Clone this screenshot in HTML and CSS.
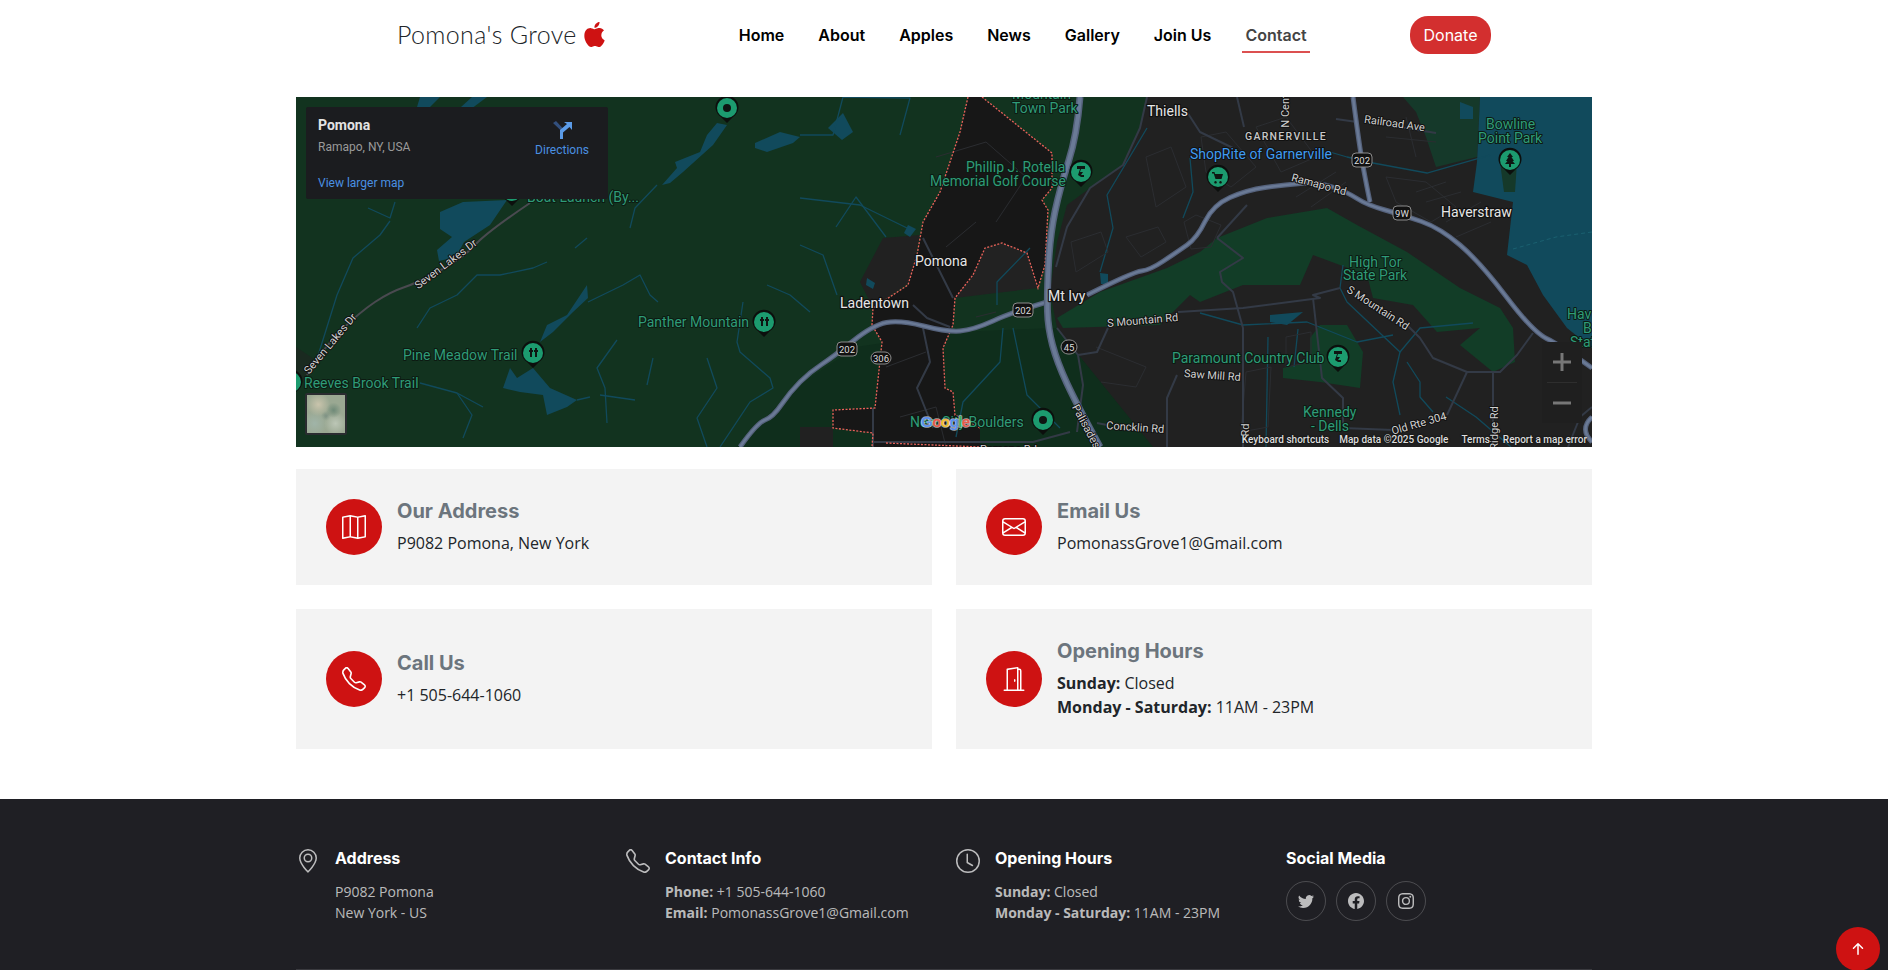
FILE: index.html
```html
<!DOCTYPE html>
<html lang="en">
<head>
    <meta charset="UTF-8">
    <meta name="viewport" content="width=device-width, initial-scale=1.0">
    <title>Contact - Pomona's Grove</title>
    <link rel="stylesheet" href="styles.css">
</head>
<body>
    <header class="header">
        <a class="logo" href="#">
            <span class="logo-text">Pomona's Grove</span>
            <svg class="logo-icon" viewBox="0 0 16 16"><path d="M11.182.008C11.148-.03 9.923.023 8.857 1.18c-1.066 1.156-.902 2.482-.878 2.516.024.034 1.52.087 2.475-1.258.955-1.345.762-2.391.728-2.43Zm3.314 11.733c-.048-.096-2.325-1.234-2.113-3.422.212-2.189 1.675-2.789 1.698-2.854.023-.065-.597-.79-1.254-1.157a3.692 3.692 0 0 0-1.563-.434c-.108-.003-.483-.095-1.254.116-.508.139-1.653.589-1.968.607-.316.018-1.256-.522-2.267-.665-.647-.1-1.333.105-1.824.303-.49.198-1.422.761-2.074 2.244-.652 1.482-.311 3.83-.067 4.56.244.729.625 1.924 1.273 2.796.576.984 1.34 1.667 1.659 1.899.319.232 1.219.386 1.843.067.502-.308 1.408-.485 1.766-.472.357.013 1.061.154 1.782.539.571.197 1.111.115 1.652-.105.541-.221 1.324-1.059 2.238-2.758.347-.79.505-1.217.473-1.282Z"/></svg>
        </a>
        <nav class="nav">
            <a href="#">Home</a>
            <a href="#">About</a>
            <a href="#">Apples</a>
            <a href="#">News</a>
            <a href="#">Gallery</a>
            <a href="#">Join Us</a>
            <a href="#" class="active">Contact</a>
        </nav>
        <a class="donate" href="#">Donate</a>
    </header>

    <main class="contact">
        <div class="map">
            <svg class="map-canvas" viewBox="0 0 1296 350" width="1296" height="350">
                <defs>
                    <g id="pin-shape">
                        <path d="M0 15 L-6 9 A11.5 11.5 0 1 1 6 9 Z" fill="#0c0f0d"/>
                        <circle cx="0" cy="0" r="10" class="pin-fill"/>
                    </g>
                    <g id="hwy-paths">
                        <path d="M444 350 Q461 326 469 323 Q477 320 485.500 307.500 Q494 295 504 285 Q514 275 525.500 267.500 Q537 260 557 244 Q577 228 590.500 225.500 Q604 223 627.500 229 Q651 235 664 234 Q677 233 697 224 Q717 215 751 205"/>
                        <path d="M791 198 Q837 175 845.500 174 Q854 173 867.500 164 Q881 155 891 148 Q901 141 909 124.500 Q917 108 934 100.500 Q951 93 969 90.500 Q987 88 1004.500 86.500 Q1022 85 1036.500 90 Q1051 95 1061 101.500 Q1071 108 1089 113 Q1107 118 1125.500 124.500 Q1144 131 1164 148 Q1184 165 1210.500 200 Q1237 235 1250.500 241.500 Q1264 248 1296 271"/>
                        <path d="M1057 0 Q1061 31 1064 51 Q1067 71 1074 105"/>
                        <path d="M1296 320 Q1283 332 1296 345"/>
                    </g>
                    <path id="hwy-wide" d="M784 0 Q781 38 772.500 64.500 Q764 91 759 114.500 Q754 138 752.500 168 Q751 198 751.500 214.500 Q752 231 756.500 248 Q761 265 771 286.500 Q781 308 804 350"/>
                </defs>

                <!-- land -->
                <rect width="1296" height="350" fill="#12331f"/>
                <path d="M440 350 L500 290 L560 250 L660 235 L760 231 L860 350Z" fill="#0f2e1c"/>
                <path d="M851 0 L844 31 L827 68 L794 91 L771 108 L761 145 L754 195 L761 231 L857 350 L1296 350 L1296 0Z" fill="#212121"/>
                <path d="M504 330 L537 330 L537 350 L504 350Z" fill="#212121"/>
                <path d="M0 250 L18 262 L8 285 L0 280Z" fill="#1a2a20"/>
                <path d="M564 185 L587 141 L624 138 L614 185 L577 211Z" fill="#212121"/>
                <path d="M659 201 L689 151 L706 146 L731 156 L742 191 L700 196Z" fill="#222222"/>
                <path d="M761 221 L804 195 L871 171 L904 155 L921 141 L971 121 L1031 111 L1061 128 L1111 155 L1164 191 L1204 211 L1217 231 L1219 265 L1197 275 L1164 248 L1184 231 L1141 235 L1117 208 L1077 201 L1071 178 L1017 158 L1004 188 L947 188 L904 205 L894 198 L864 228 L767 231Z" fill="#123d27"/>
                <path d="M1014 241 L1024 228 L1051 228 L1067 255 L1064 291 L1024 285 L987 281 L987 271 L1014 265Z" fill="#123d27"/>
                <path d="M1107 0 L1184 0 L1181 60 L1140 70 L1130 40 L1120 15Z" fill="#15392a"/>
                <path d="M672 0 L664 35 L644 95 L627 125 L621 158 L612 188 L577 211 L576 228 L586 245 L579 311 L537 313 L537 331 L577 336 L576 350 L684 350 L684 331 L659 318 L657 295 L649 291 L647 251 L657 228 L659 201 L677 178 L689 151 L706 146 L731 156 L742 191 L749 168 L752 113 L746 103 L756 91 L756 56 L686 0Z" fill="#171717"/>

                <!-- water -->
                <g fill="#114a5c">
                    <path d="M1184 0 L1181 65 L1177 95 L1217 105 L1211 158 L1231 168 L1247 198 L1271 231 L1296 251 L1296 0Z"/>
                    <path d="M144 115 L167 105 L211 103 L194 128 L168 145 L160 160 L143 164 L141 153 L156 140 L144 132Z"/>
                    <path d="M124 0 L144 0 L134 10 L121 10Z"/>
                    <path d="M176 0 L191 0 L175 12 L165 10Z"/>
                    <path d="M431 28 L421 26 L411 38 L404 55 L379 65 L381 71 L366 88 L374 86 L387 75 L417 48Z"/>
                    <path d="M459 46 L484 35 L504 40 L497 46 L471 55 L459 51Z"/>
                    <path d="M291 188 L271 218 L251 228 L244 245 L257 235 L277 215 L292 201Z"/>
                    <path d="M207 291 L214 271 L221 281 L237 271 L254 291 L281 303 L271 310 L251 318 L247 298 L224 295Z"/>
                    <path d="M532 31 L547 16 L557 35 L546 43Z"/>
                    <path d="M571 181 L579 186 L577 192 L570 188Z"/>
                    <path d="M804 176 L812 177 L812 187 L805 187Z"/>
                    <path d="M974 218 L1007 215 L991 228 L974 225Z"/>
                    <path d="M1164 5 L1177 10 L1177 22 L1164 22Z"/>
                    <path d="M620 132 L612 128 L608 136 L614 140Z"/>
                </g>
                <path d="M1204 65 L1221 65 L1219 95 L1208 95Z" fill="#15392a"/>
                <path d="M1217 152 L1260 140 L1296 135" fill="none" stroke="#1a6070" stroke-width="1" stroke-dasharray="4 3"/>

                <!-- streams -->
                <g class="streams">
                    <path d="M20 265 L41 198 L57 161 L84 138 L94 124"/>
                    <path d="M72 111 L94 121 L99 105"/>
                    <path d="M121 231 L134 211 L161 198 L181 178 L204 178 L237 171 L251 165"/>
                    <path d="M334 131 L339 111 L361 88"/>
                    <path d="M291 141 L279 151"/>
                    <path d="M292 205 L327 188 L344 178 L354 198 L362 205"/>
                    <path d="M471 188 L494 198 L514 215"/>
                    <path d="M447 205 L441 245 L444 255 L474 281 L477 291 L454 305 L424 350"/>
                    <path d="M411 261 L421 291 L401 321 L411 350"/>
                    <path d="M321 243 L301 271 L309 291 L311 326"/>
                    <path d="M161 296 L176 318 L167 341"/>
                    <path d="M124 286 L161 296 L187 310"/>
                    <path d="M281 303 L294 300 M304 298 L339 303"/>
                    <path d="M357 261 L351 288"/>
                    <path d="M504 38 L537 38 L547 0 M547 0 L614 1 L604 38"/>
                    <path d="M504 101 L564 108 L611 131"/>
                    <path d="M504 148 L527 158 L541 198"/>
                    <path d="M701 208 L701 185 L734 151"/>
                    <path d="M717 231 L731 298 L764 331"/>
                    <path d="M707 231 L704 265 L667 305 L660 340"/>
                    <path d="M851 31 L811 98 L817 131 L804 175"/>
                    <path d="M894 61 L897 95 L887 121"/>
                    <path d="M1047 168 L1044 191 L1051 205 L1104 255 L1124 231 L1177 226"/>
                    <path d="M1104 255 L1097 285 L1104 318"/>
                    <path d="M1111 265 L1124 285 L1124 300 L1137 315"/>
                    <path d="M904 216 L947 228 L1011 225 L1061 245 L1097 238"/>
                    <path d="M1077 66 L1131 76 L1194 58"/>
                    <path d="M1034 55 L1051 60 L1077 66"/>
                    <path d="M972 240 L970 350 M1002 232 L998 270"/>
                    <path d="M1150 300 L1180 320 L1215 350"/>
                    <path d="M540 130 L560 100 L590 140"/>
                </g>

                <!-- streets -->
                <g class="streets">
                    <path d="M888 125 L900 118 L925 128 L915 150 L895 152Z"/>
                    <path d="M830 140 L862 130 L870 145 L845 160Z"/>
                    <path d="M775 145 L805 135 L812 155 L780 175 Z"/>
                    <path d="M850 60 L875 50 L890 90 L860 110 Z"/>
                    <path d="M905 40 L930 35 L960 70 L935 90 L910 75Z"/>
                    <path d="M960 30 L990 20 L1020 60 L985 75 Z"/>
                    <path d="M1090 80 L1130 85 L1160 110 L1135 125 L1100 105Z"/>
                    <path d="M1120 95 L1150 85 M1130 105 L1165 95 M1150 125 L1185 105 M1160 140 L1195 125"/>
                    <path d="M1000 100 L1040 75 M1015 110 L1050 85"/>
                    <path d="M990 240 L1015 235 L1015 265 L990 270Z"/>
                    <path d="M1110 20 L1120 60 M1090 40 L1140 45"/>
                    <path d="M950 275 L975 270 L972 330 L945 335Z"/>
                    <path d="M680 220 L700 215 M640 60 L690 45 L730 80 L700 125 M650 150 L680 125"/>
                    <path d="M604 320 L640 310 L650 350 M590 270 L630 255"/>
                    <path d="M800 250 L850 270 L840 290 L805 285"/>
                </g>
                <g class="roads-minor">
                    <path d="M851 0 L844 31 L827 68 L794 91 L771 130 L760 170"/>
                    <path d="M891 15 L904 35 L937 51 M941 0 L948 30"/>
                    <path d="M761 231 L782 258 L787 288 L784 311 L781 335 M782 258 L801 255 L812 231"/>
                    <path d="M801 326 L811 328 M881 278 L871 301 L871 350"/>
                    <path d="M921 141 L951 108 M921 141 L947 161 L924 175 L926 185 L937 195 L947 231 L947 350"/>
                    <path d="M882 215 L947 211 L1024 201 L1017 198 L1044 191"/>
                    <path d="M1111 228 L1124 241 L1137 261 L1171 275 L1204 275 L1221 258 L1237 236"/>
                    <path d="M1171 275 L1151 318 M1197 275 L1197 350"/>
                    <path d="M1017 201 L1026 281 L1047 301 L1047 328 M1047 331 L1097 333"/>
                    <path d="M627 141 L644 175 L657 201 M617 208 L631 221 L654 230"/>
                    <path d="M627 231 L634 265 L621 291 L637 331"/>
                    <path d="M577 345 L737 345 L774 335 M577 311 L577 350"/>
                    <path d="M1040 22 L1061 25 M1140 36 L1090 28"/>
                    <path d="M1272 350 L1284 320 L1296 310"/>
                </g>
                <path class="road-lake" d="M11 278 Q27 251 45.500 233 Q64 215 79 205 Q94 195 107.500 190.500 Q121 186 144 173.500 Q167 161 179 148 Q191 135 234 106"/>
                <g class="boundary">
                    <path d="M672 0 L664 35 L644 95 L627 125 L621 158 L612 188 L577 211 L576 228 L586 245 L579 311 L537 313 L537 331 L577 336 L576 350"/>
                    <path d="M590 346 L684 350 M684 331 L659 318 L657 295 L649 291 L647 251 L657 228 L659 201 L677 178 L689 151 L706 146 L731 156 L742 191 L749 168 L752 113 L746 103 L756 91 L756 56 L686 0"/>
                </g>

                <!-- highways -->
                <use href="#hwy-paths" class="hwy-outer"/>
                <use href="#hwy-paths" class="hwy-inner"/>
                <use href="#hwy-wide" class="hwy-wide-outer"/>
                <use href="#hwy-wide" class="hwy-wide-inner"/>

                <!-- road labels -->
                <g class="lbl-road">
                    <text transform="translate(152 170) rotate(-37)" text-anchor="middle">Seven Lakes Dr</text>
                    <text transform="translate(37 249) rotate(-50)" text-anchor="middle">Seven Lakes Dr</text>
                    <text transform="translate(847 227) rotate(-5)" text-anchor="middle">S Mountain Rd</text>
                    <text transform="translate(916 282) rotate(4)" text-anchor="middle">Saw Mill Rd</text>
                    <text transform="translate(839 334) rotate(4)" text-anchor="middle">Concklin Rd</text>
                    <text transform="translate(787 331) rotate(62)" text-anchor="middle">Palisades</text>
                    <text transform="translate(1098 30) rotate(8)" text-anchor="middle">Railroad Ave</text>
                    <text transform="translate(1022 91) rotate(15)" text-anchor="middle">Ramapo Rd</text>
                    <text transform="translate(1080 214) rotate(33)" text-anchor="middle">S Mountain Rd</text>
                    <text transform="translate(1124 330) rotate(-16)" text-anchor="middle">Old Rte 304</text>
                    <text transform="translate(993 14) rotate(-90)" text-anchor="middle">N Cent</text>
                    <text transform="translate(1202 331) rotate(-90)" text-anchor="middle">Ridge Rd</text>
                    <text transform="translate(953 333) rotate(-90)" text-anchor="middle">Rd</text>
                    <text x="684" y="356">Pomona Rd</text>
                </g>

                <!-- shields -->
                <g class="shield">
                    <g transform="translate(727 213)"><rect x="-10" y="-7" width="20" height="14" rx="4"/><text text-anchor="middle" y="3.5">202</text></g>
                    <g transform="translate(551 252)"><rect x="-10" y="-7" width="20" height="14" rx="4"/><text text-anchor="middle" y="3.5">202</text></g>
                    <g transform="translate(585 261)"><rect x="-10" y="-6" width="20" height="12" rx="6"/><text text-anchor="middle" y="3.5">306</text></g>
                    <g transform="translate(773 250)"><rect x="-8" y="-7" width="16" height="14" rx="7"/><text text-anchor="middle" y="3.5">45</text></g>
                    <g transform="translate(1066 63)"><rect x="-10" y="-7" width="20" height="14" rx="4"/><text text-anchor="middle" y="3.5">202</text></g>
                    <g transform="translate(1106 116)"><rect x="-9" y="-7" width="18" height="14" rx="4"/><text text-anchor="middle" y="3.5">9W</text></g>
                </g>

                <!-- place labels -->
                <g class="lbl-green">
                    <text x="231" y="105">Boat Launch (By...</text>
                    <text x="107" y="263">Pine Meadow Trail</text>
                    <text x="8" y="291">Reeves Brook Trail</text>
                    <text x="342" y="230">Panther Mountain</text>
                    <text x="716" y="2">Mountain</text>
                    <text x="716" y="16">Town Park</text>
                    <text x="670" y="75">Phillip J. Rotella</text>
                    <text x="634" y="89">Memorial Golf Course</text>
                    <text x="614" y="330">New City Boulders</text>
                    <text x="876" y="266">Paramount Country Club</text>
                    <text x="1053" y="170">High Tor</text>
                    <text x="1047" y="183">State Park</text>
                    <text x="1007" y="320">Kennedy</text>
                    <text x="1015" y="334">- Dells</text>
                    <text x="1190" y="32">Bowline</text>
                    <text x="1182" y="46">Point Park</text>
                    <text x="1271" y="222">Hav</text>
                    <text x="1287" y="236">B</text>
                    <text x="1274" y="250">Stat</text>
                </g>
                <g class="lbl-town">
                    <text x="851" y="19">Thiells</text>
                    <text x="619" y="169">Pomona</text>
                    <text x="544" y="211">Ladentown</text>
                    <text x="752" y="204">Mt Ivy</text>
                    <text x="1145" y="120">Haverstraw</text>
                </g>
                <text class="lbl-hamlet" x="949" y="43">GARNERVILLE</text>
                <text class="lbl-shop" x="894" y="62">ShopRite of Garnerville</text>

                <!-- pins -->
                <g class="pin">
                    <g transform="translate(468 225)"><use href="#pin-shape"/><path class="pin-mark" d="M-3 -5 h2 v2 h1 v2 h-1 v5 h-2 v-5 h-1 v-2 h1Z M2 -5 h2 v2 h1 v2 h-1 v5 h-2 v-5 h-1 v-2 h1Z"/></g>
                    <g transform="translate(237 256)"><use href="#pin-shape"/><path class="pin-mark" d="M-3 -5 h2 v2 h1 v2 h-1 v5 h-2 v-5 h-1 v-2 h1Z M2 -5 h2 v2 h1 v2 h-1 v5 h-2 v-5 h-1 v-2 h1Z"/></g>
                    <g transform="translate(431 11)"><use href="#pin-shape"/><circle r="4" class="pin-mark"/></g>
                    <g transform="translate(-5 285)"><use href="#pin-shape"/></g>
                    <g transform="translate(216 94)"><use href="#pin-shape"/></g>
                    <g transform="translate(747 323)"><use href="#pin-shape"/><circle r="4" class="pin-mark"/></g>
                    <g transform="translate(785 75)"><use href="#pin-shape"/><path class="pin-mark" d="M-4 -6 h8 v3 h-4 l-1 3 h3 l-2 3 h3 v2 h-3 l-3 -2 l2 -6 h-3Z"/></g>
                    <g transform="translate(1042 260)"><use href="#pin-shape"/><path class="pin-mark" d="M-4 -6 h8 v3 h-4 l-1 3 h3 l-2 3 h3 v2 h-3 l-3 -2 l2 -6 h-3Z"/></g>
                    <g transform="translate(1214 63)"><use href="#pin-shape"/><path class="pin-mark" d="M0 -7 L3 -3 H1.5 L4 1 H2.5 L5 4 H1 V7 H-1 V4 H-5 L-2.500 1 H-4 L-1.500 -3 H-3Z"/></g>
                    <g transform="translate(922 80)" class="pin-blue"><use href="#pin-shape"/><path class="pin-mark" d="M-6 -5 h2.500 l.5 2 h8 l-1.500 5 h-6 l-1.800 -5.500 h-1.700Z M-2.500 4 a1.300 1.300 0 1 0 .01 0Z M2.500 4 a1.300 1.300 0 1 0 .01 0Z"/></g>
                </g>

                <text class="google" x="625" y="330"><tspan fill="#5b8ff0">G</tspan><tspan fill="#e8594a">o</tspan><tspan fill="#f5bd2e">o</tspan><tspan fill="#5b8ff0">g</tspan><tspan fill="#3fb060">l</tspan><tspan fill="#e8594a">e</tspan></text>
            </svg>

            <div class="place-card">
                <div class="place-info">
                    <div class="place-name">Pomona</div>
                    <div class="place-addr">Ramapo, NY, USA</div>
                    <a class="place-link" href="#">View larger map</a>
                </div>
                <a class="directions" href="#">
                    <svg viewBox="0 0 20 20" width="20" height="20">
                        <path d="M1 3 L4 1 L10.500 8 L10.500 12 Z" fill="#33507e"/>
                        <path d="M8 19 V10 L15 4 L12 2 H20 V10 L17.500 7 L11 12.500 V19Z" fill="#5b9be8"/>
                    </svg>
                    Directions
                </a>
            </div>
            <div class="map-thumb"></div>
            <div class="zoom-ctrl">
                <svg viewBox="0 0 18 18" width="18" height="18"><path d="M7.500 0 h3 v7.500 h7.500 v3 h-7.500 v7.500 h-3 v-7.500 h-7.500 v-3 h7.500Z"/></svg>
                <i></i>
                <svg viewBox="0 0 18 18" width="18" height="18"><path d="M0 7.500 h18 v3 h-18Z"/></svg>
            </div>
            <div class="attribution">
                <span>Keyboard shortcuts</span>
                <span>Map data ©2025 Google</span>
                <span>Terms</span>
                <span>Report a map error</span>
            </div>
        </div>

        <div class="info-grid">
            <div class="info-card">
                <span class="info-icon">
                    <svg viewBox="0 0 16 16"><path fill-rule="evenodd" d="M15.817.113A.5.5 0 0 1 16 .5v14a.5.5 0 0 1-.402.49l-5 1a.502.502 0 0 1-.196 0L5.500 15.010l-4.902.98A.5.5 0 0 1 0 15.500v-14a.5.5 0 0 1 .402-.49l5-1a.5.5 0 0 1 .196 0L10.500.99l4.902-.98a.5.5 0 0 1 .415.103zM10 1.910l-4-.8v12.980l4 .8V1.910zm1 12.980 4-.8V1.110l-4 .8v12.980zm-6-.8V1.110l-4 .8v12.980l4-.8z"/></svg>
                </span>
                <div>
                    <h3>Our Address</h3>
                    <p>P9082 Pomona, New York</p>
                </div>
            </div>
            <div class="info-card">
                <span class="info-icon">
                    <svg viewBox="0 0 16 16"><path d="M0 4a2 2 0 0 1 2-2h12a2 2 0 0 1 2 2v8a2 2 0 0 1-2 2H2a2 2 0 0 1-2-2V4Zm2-1a1 1 0 0 0-1 1v.217l7 4.200 7-4.200V4a1 1 0 0 0-1-1H2Zm13 2.383-4.708 2.825L15 11.105V5.383Zm-.034 6.876-5.640-3.471L8 9.583l-1.326-.795-5.640 3.470A1 1 0 0 0 2 13h12a1 1 0 0 0 .966-.741ZM1 11.105l4.708-2.897L1 5.383v5.722Z"/></svg>
                </span>
                <div>
                    <h3>Email Us</h3>
                    <p>PomonassGrove1@Gmail.com</p>
                </div>
            </div>
            <div class="info-card">
                <span class="info-icon">
                    <svg viewBox="0 0 16 16"><path d="M3.654 1.328a.678.678 0 0 0-1.015-.063L1.605 2.300c-.483.484-.661 1.169-.45 1.770a17.568 17.568 0 0 0 4.168 6.608 17.569 17.569 0 0 0 6.608 4.168c.601.211 1.286.033 1.770-.45l1.034-1.034a.678.678 0 0 0-.063-1.015l-2.307-1.794a.678.678 0 0 0-.58-.122l-2.190.547a1.745 1.745 0 0 1-1.657-.459L5.482 8.062a1.745 1.745 0 0 1-.46-1.657l.548-2.190a.678.678 0 0 0-.122-.58L3.654 1.328zM1.884.511a1.745 1.745 0 0 1 2.612.163L6.290 2.980c.329.423.445.974.315 1.494l-.547 2.190a.678.678 0 0 0 .178.643l2.457 2.457a.678.678 0 0 0 .644.178l2.189-.547a1.745 1.745 0 0 1 1.494.315l2.306 1.794c.829.645.905 1.870.163 2.611l-1.034 1.034c-.74.74-1.846 1.065-2.877.702a18.634 18.634 0 0 1-7.010-4.420 18.634 18.634 0 0 1-4.420-7.009c-.362-1.030-.037-2.137.703-2.877L1.885.511z"/></svg>
                </span>
                <div>
                    <h3>Call Us</h3>
                    <p>+1 505-644-1060</p>
                </div>
            </div>
            <div class="info-card">
                <span class="info-icon">
                    <svg viewBox="0 0 16 16"><path d="M8.500 10c-.276 0-.5-.448-.5-1s.224-1 .5-1 .5.448.5 1-.224 1-.5 1z"/><path d="M10.828.122A.5.5 0 0 1 11 .5V1h.5A1.500 1.500 0 0 1 13 2.500V15h1.500a.5.5 0 0 1 0 1h-13a.5.5 0 0 1 0-1H3V1.500a.5.5 0 0 1 .43-.495l7-1a.5.5 0 0 1 .398.117zM11.500 2H11v13h1V2.500a.5.5 0 0 0-.5-.5zM4 1.934V15h6V1.077l-6 .857z"/></svg>
                </span>
                <div>
                    <h3>Opening Hours</h3>
                    <p><strong>Sunday:</strong> Closed</p>
                    <p><strong>Monday - Saturday:</strong> 11AM - 23PM</p>
                </div>
            </div>
        </div>
    </main>

    <footer class="footer">
        <div class="footer-grid">
            <div class="footer-col">
                <svg class="footer-icon" viewBox="0 0 16 16"><path d="M12.166 8.940c-.524 1.062-1.234 2.120-1.960 3.070A31.493 31.493 0 0 1 8 14.580a31.481 31.481 0 0 1-2.206-2.570c-.726-.95-1.436-2.008-1.960-3.070C3.304 7.867 3 6.862 3 6a5 5 0 0 1 10 0c0 .862-.305 1.867-.834 2.940zM8 16s6-5.686 6-10A6 6 0 0 0 2 6c0 4.314 6 10 6 10z"/><path d="M8 8a2 2 0 1 1 0-4 2 2 0 0 1 0 4zm0 1a3 3 0 1 0 0-6 3 3 0 0 0 0 6z"/></svg>
                <div>
                    <h4>Address</h4>
                    <p>P9082 Pomona</p>
                    <p>New York - US</p>
                </div>
            </div>
            <div class="footer-col">
                <svg class="footer-icon" viewBox="0 0 16 16"><path d="M3.654 1.328a.678.678 0 0 0-1.015-.063L1.605 2.300c-.483.484-.661 1.169-.45 1.770a17.568 17.568 0 0 0 4.168 6.608 17.569 17.569 0 0 0 6.608 4.168c.601.211 1.286.033 1.770-.45l1.034-1.034a.678.678 0 0 0-.063-1.015l-2.307-1.794a.678.678 0 0 0-.58-.122l-2.190.547a1.745 1.745 0 0 1-1.657-.459L5.482 8.062a1.745 1.745 0 0 1-.46-1.657l.548-2.190a.678.678 0 0 0-.122-.58L3.654 1.328zM1.884.511a1.745 1.745 0 0 1 2.612.163L6.290 2.980c.329.423.445.974.315 1.494l-.547 2.190a.678.678 0 0 0 .178.643l2.457 2.457a.678.678 0 0 0 .644.178l2.189-.547a1.745 1.745 0 0 1 1.494.315l2.306 1.794c.829.645.905 1.870.163 2.611l-1.034 1.034c-.74.74-1.846 1.065-2.877.702a18.634 18.634 0 0 1-7.010-4.420 18.634 18.634 0 0 1-4.420-7.009c-.362-1.030-.037-2.137.703-2.877L1.885.511z"/></svg>
                <div>
                    <h4>Contact Info</h4>
                    <p><strong>Phone:</strong> +1 505-644-1060</p>
                    <p><strong>Email:</strong> PomonassGrove1@Gmail.com</p>
                </div>
            </div>
            <div class="footer-col">
                <svg class="footer-icon" viewBox="0 0 16 16"><path d="M8 3.500a.5.5 0 0 0-1 0V9a.5.5 0 0 0 .252.434l3.500 2a.5.5 0 0 0 .496-.868L8 8.710V3.500z"/><path d="M8 16A8 8 0 1 0 8 0a8 8 0 0 0 0 16zm7-8A7 7 0 1 1 1 8a7 7 0 0 1 14 0z"/></svg>
                <div>
                    <h4>Opening Hours</h4>
                    <p><strong>Sunday:</strong> Closed</p>
                    <p><strong>Monday - Saturday:</strong> 11AM - 23PM</p>
                </div>
            </div>
            <div class="footer-social">
                <h4>Social Media</h4>
                <div class="social-links">
                    <a href="#"><svg viewBox="0 0 16 16"><path d="M5.026 15c6.038 0 9.341-5.003 9.341-9.334 0-.14 0-.282-.006-.422A6.685 6.685 0 0 0 16 3.542a6.658 6.658 0 0 1-1.889.518 3.301 3.301 0 0 0 1.447-1.817 6.533 6.533 0 0 1-2.087.793A3.286 3.286 0 0 0 7.875 6.030a9.325 9.325 0 0 1-6.767-3.429 3.289 3.289 0 0 0 1.018 4.382A3.323 3.323 0 0 1 .64 6.575v.045a3.288 3.288 0 0 0 2.632 3.218 3.203 3.203 0 0 1-.865.115 3.230 3.230 0 0 1-.614-.057 3.283 3.283 0 0 0 3.067 2.277A6.588 6.588 0 0 1 .78 13.580a6.320 6.320 0 0 1-.78-.045A9.344 9.344 0 0 0 5.026 15z"/></svg></a>
                    <a href="#"><svg viewBox="0 0 16 16"><path d="M16 8.049c0-4.446-3.582-8.050-8-8.050C3.580 0-.002 3.603-.002 8.050c0 4.017 2.926 7.347 6.750 7.951v-5.625h-2.030V8.050H6.750V6.275c0-2.017 1.195-3.131 3.022-3.131.876 0 1.791.157 1.791.157v1.980h-1.009c-.993 0-1.303.621-1.303 1.258v1.510h2.218l-.354 2.326H9.250V16c3.824-.604 6.750-3.934 6.750-7.951z"/></svg></a>
                    <a href="#"><svg viewBox="0 0 16 16"><path d="M8 0C5.829 0 5.556.01 4.703.048 3.850.088 3.269.222 2.760.42a3.917 3.917 0 0 0-1.417.923A3.927 3.927 0 0 0 .42 2.760C.222 3.268.087 3.850.048 4.700.01 5.555 0 5.827 0 8.001c0 2.172.01 2.444.048 3.297.04.852.174 1.433.372 1.942.205.526.478.972.923 1.417.444.445.89.719 1.416.923.51.198 1.090.333 1.942.372C5.555 15.990 5.827 16 8 16s2.444-.01 3.298-.048c.851-.04 1.434-.174 1.943-.372a3.916 3.916 0 0 0 1.416-.923c.445-.445.718-.891.923-1.417.197-.509.332-1.090.372-1.942C15.990 10.445 16 10.173 16 8s-.01-2.445-.048-3.299c-.04-.851-.175-1.433-.372-1.941a3.926 3.926 0 0 0-.923-1.417A3.911 3.911 0 0 0 13.240.42c-.51-.198-1.092-.333-1.943-.372C10.443.01 10.172 0 7.998 0h.003zm-.717 1.442h.718c2.136 0 2.389.007 3.232.046.78.035 1.204.166 1.486.275.373.145.64.319.92.599.28.28.453.546.598.92.11.281.24.705.275 1.485.039.843.047 1.096.047 3.231s-.008 2.389-.047 3.232c-.035.78-.166 1.203-.275 1.485a2.470 2.470 0 0 1-.599.919c-.28.28-.546.453-.92.598-.28.11-.704.24-1.485.276-.843.038-1.096.047-3.232.047s-2.390-.009-3.233-.047c-.78-.036-1.203-.166-1.485-.276a2.478 2.478 0 0 1-.92-.598 2.480 2.480 0 0 1-.6-.92c-.109-.281-.24-.705-.275-1.485-.038-.843-.046-1.096-.046-3.233 0-2.136.008-2.388.046-3.231.036-.78.166-1.204.276-1.486.145-.373.319-.64.599-.92.28-.28.546-.453.92-.598.282-.11.705-.24 1.485-.276.738-.034 1.024-.044 2.515-.045v.002zm4.988 1.328a.96.96 0 1 0 0 1.920.96.96 0 0 0 0-1.920zm-4.270 1.122a4.109 4.109 0 1 0 0 8.217 4.109 4.109 0 0 0 0-8.217zm0 1.441a2.667 2.667 0 1 1 0 5.334 2.667 2.667 0 0 1 0-5.334z"/></svg></a>
                </div>
            </div>
        </div>
        <div class="footer-line"></div>
    </footer>

    <a class="scroll-top" href="#">
        <svg viewBox="0 0 16 16"><path d="M8 12a.5.5 0 0 0 .5-.5V5.707l2.146 2.147a.5.5 0 0 0 .708-.708l-3-3a.5.5 0 0 0-.708 0l-3 3a.5.5 0 1 0 .708.708L7.500 5.707V11.500a.5.5 0 0 0 .5.5z"/></svg>
    </a>
</body>
</html>
```

FILE: styles.css
```css
* {
    box-sizing: border-box;
}

body {
    margin: 0;
    background-color: #fff;
    color: #212529;
    font-family: 'Open Sans', sans-serif;
    font-size: 16px;
    line-height: 1.5;
}

a {
    text-decoration: none;
}

/* header */
.header {
    display: flex;
    align-items: center;
    width: 1094px;
    height: 70px;
    margin: 0 auto;
}

.logo {
    display: flex;
    align-items: center;
    gap: 5px;
    color: #212529;
}

.logo-text {
    margin-top: -2px;
    font-family: Lato, sans-serif;
    font-size: 25px;
    font-weight: 300;
    letter-spacing: 0.35px;
    line-height: 1;
}

.logo-icon {
    width: 25px;
    height: 25px;
    margin-top: -2px;
    fill: #ce1212;
}

.nav {
    display: flex;
    gap: 28px;
    margin-left: 129px;
}

.nav a {
    padding: 9px 3px 7px;
    border-bottom: 2px solid transparent;
    color: #000;
    font-family: Inter, sans-serif;
    font-size: 16px;
    font-weight: 600;
    line-height: 18px;
}

.nav a.active {
    border-bottom-color: #dc5050;
    color: #444;
}

.donate {
    margin-left: auto;
    padding: 8px 13.5px;
    border-radius: 18px;
    background-color: #d32f2f;
    color: #fff;
    font-family: Inter, sans-serif;
    font-size: 16px;
    line-height: 22px;
}

/* map and contact cards */
.contact {
    width: 1296px;
    margin: 27px auto 50px;
}

.map {
    position: relative;
    height: 350px;
    overflow: hidden;
    background-color: #12331f;
}

.map-canvas {
    display: block;
    font-family: Roboto, sans-serif;
}

.streams path {
    fill: none;
    stroke: #114a5c;
    stroke-width: 1.3;
    stroke-linejoin: round;
}

.streets path {
    fill: none;
    stroke: #2b2d31;
    stroke-width: 1;
    stroke-linejoin: round;
}

.roads-minor path {
    fill: none;
    stroke: #333a46;
    stroke-width: 2;
    stroke-linejoin: round;
}

.road-lake {
    fill: none;
    stroke: #4a4a50;
    stroke-width: 2;
}

.boundary path {
    fill: none;
    stroke: #e8625a;
    stroke-width: 1.3;
    stroke-dasharray: 2 1.5;
}

.hwy-outer,
.hwy-inner,
.hwy-wide-outer,
.hwy-wide-inner {
    fill: none;
    stroke-linejoin: round;
}

.hwy-outer {
    stroke: #55627c;
    stroke-width: 5;
}

.hwy-inner {
    stroke: #6a7a96;
    stroke-width: 2.5;
}

.hwy-wide-outer {
    stroke: #55627c;
    stroke-width: 7;
}

.hwy-wide-inner {
    stroke: #6a7a96;
    stroke-width: 4;
}

.map-canvas text {
    paint-order: stroke;
    stroke-linejoin: round;
}

.lbl-green text {
    fill: #2f9c78;
    stroke: #0c1a12;
    stroke-width: 2px;
    font-size: 14px;
}

.lbl-town text {
    fill: #e6e6e6;
    stroke: #111;
    stroke-width: 2.5px;
    font-size: 14px;
}

.lbl-road text {
    fill: #d0d0d0;
    stroke: #111;
    stroke-width: 2px;
    font-size: 11px;
}

.lbl-hamlet {
    fill: #c8c8c8;
    stroke: #111;
    stroke-width: 2px;
    font-size: 10.5px;
    font-weight: 500;
    letter-spacing: 1.3px;
}

.lbl-shop {
    fill: #3f9bf0;
    stroke: #111;
    stroke-width: 2px;
    font-size: 14px;
}

.shield rect {
    fill: #111;
    stroke: #8c8c8c;
    stroke-width: 1;
}

.shield text {
    fill: #ddd;
    font-size: 9.5px;
}

.pin-fill {
    fill: #1c9b6f;
}

.pin-blue .pin-fill {
    fill: #1a94f0;
}

.pin-mark {
    fill: #0e1512;
}

.google {
    paint-order: stroke;
    stroke: rgba(255, 255, 255, 0.6);
    stroke-width: 1.5px;
    font-family: 'Liberation Sans', sans-serif;
    font-size: 15px;
    font-weight: 700;
    letter-spacing: -0.5px;
}

.place-card {
    position: absolute;
    top: 10px;
    left: 10px;
    display: flex;
    justify-content: space-between;
    width: 302px;
    height: 92px;
    padding: 10px 19px 0 12px;
    border-radius: 2px;
    background-color: #1b1c1f;
    font-family: Roboto, sans-serif;
    font-size: 12px;
}

.place-name {
    color: #e3e3e3;
    font-size: 14px;
    font-weight: 700;
    line-height: 16px;
}

.place-addr {
    margin-top: 6px;
    color: #9a9a9a;
    line-height: 16px;
}

.place-link {
    display: block;
    margin-top: 20px;
    color: #4a90e2;
    line-height: 16px;
}

.directions {
    display: flex;
    flex-direction: column;
    align-items: center;
    gap: 2px;
    padding-top: 3px;
    color: #4a90e2;
    line-height: 16px;
}

.map-thumb {
    position: absolute;
    left: 9px;
    top: 296px;
    width: 42px;
    height: 42px;
    border: 2px solid #2a2c30;
    border-radius: 2px;
    background-color: #9aa892;
    background-image:
        radial-gradient(circle at 30% 25%, #c9c4ac 0, transparent 30%),
        radial-gradient(circle at 70% 40%, #6f8a78 0, transparent 22%),
        radial-gradient(circle at 75% 75%, #bcc6b6 0, transparent 28%),
        radial-gradient(circle at 20% 75%, #a0b4a8 0, transparent 30%),
        radial-gradient(circle at 50% 55%, #7e9284 0, transparent 18%);
}

.zoom-ctrl {
    position: absolute;
    left: 1246px;
    top: 245px;
    display: flex;
    flex-direction: column;
    align-items: center;
    width: 40px;
    height: 81px;
    padding: 11px 0;
    background-color: #1f1f1f;
}

.zoom-ctrl svg {
    fill: #777;
}

.zoom-ctrl i {
    width: 30px;
    height: 1px;
    margin: 11px 0;
    background-color: #2e2e2e;
}

.attribution {
    position: absolute;
    right: 5px;
    bottom: 0;
    display: flex;
    gap: 10px;
    color: #ddd;
    font-family: Roboto, sans-serif;
    font-size: 10px;
    font-weight: 500;
    line-height: 14px;
    text-shadow: 0 0 2px #000;
}

.attribution span + span + span {
    margin-left: 3px;
}

.info-grid {
    display: grid;
    grid-template-columns: 1fr 1fr;
    gap: 24px;
    margin-top: 22px;
}

.info-card {
    display: flex;
    align-items: center;
    gap: 15px;
    padding: 30px;
    background-color: #f3f3f3;
}

.info-icon {
    display: flex;
    flex-shrink: 0;
    align-items: center;
    justify-content: center;
    width: 56px;
    height: 56px;
    border-radius: 50%;
    background-color: #ce1212;
}

.info-icon svg {
    width: 24px;
    height: 24px;
    fill: #fff;
}

.info-card h3 {
    margin: 0 0 8px;
    color: #6c757d;
    font-family: Inter, sans-serif;
    font-size: 20px;
    font-weight: 700;
    line-height: 24px;
}

.info-card p {
    margin: 0;
}

/* footer */
.footer {
    height: 171px;
    padding-top: 50px;
    background-color: #1f1f24;
    color: rgba(255, 255, 255, 0.7);
    font-size: 14px;
    line-height: 21px;
}

.footer-grid {
    display: grid;
    grid-template-columns: repeat(4, 306px);
    gap: 24px;
    width: 1296px;
    height: 120px;
    margin: 0 auto;
}

.footer-col {
    display: flex;
    gap: 15px;
}

.footer-icon {
    flex-shrink: 0;
    width: 24px;
    height: 24px;
    fill: rgba(255, 255, 255, 0.7);
}

.footer h4 {
    margin: 0 0 13px;
    color: #fff;
    font-family: Inter, sans-serif;
    font-size: 16px;
    font-weight: 700;
    line-height: 19px;
}

.footer p {
    margin: 0;
}

.social-links {
    display: flex;
    gap: 10px;
}

.social-links a {
    display: flex;
    align-items: center;
    justify-content: center;
    width: 40px;
    height: 40px;
    border: 1px solid rgba(255, 255, 255, 0.2);
    border-radius: 50%;
}

.social-links svg {
    width: 16px;
    height: 16px;
    fill: rgba(255, 255, 255, 0.7);
}

.footer-line {
    width: 1296px;
    height: 1px;
    margin: 0 auto;
    background-color: #3a3a3f;
}

.scroll-top {
    position: fixed;
    right: 8px;
    bottom: -1px;
    display: flex;
    align-items: center;
    justify-content: center;
    width: 44px;
    height: 44px;
    border-radius: 50%;
    background-color: #ce1212;
}

.scroll-top svg {
    width: 24px;
    height: 24px;
    fill: #fff;
}
```
